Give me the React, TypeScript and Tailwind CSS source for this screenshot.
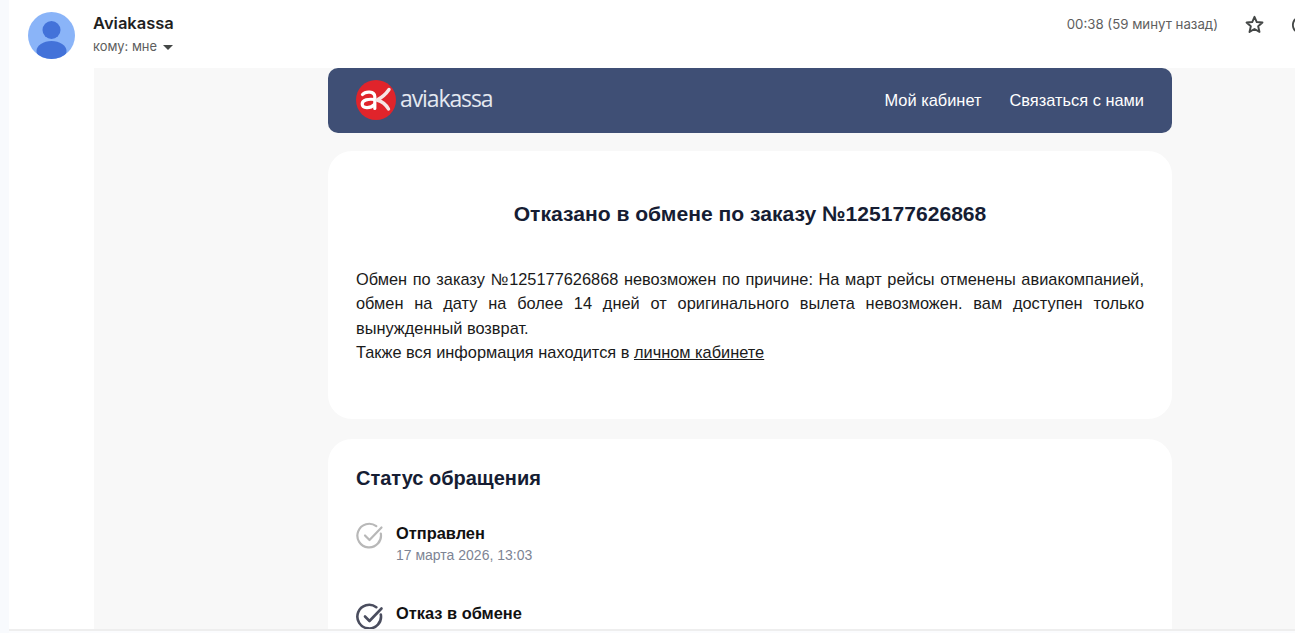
import React from "react";

const sans = "font-['Liberation_Sans',Arial,sans-serif]";

function Check({ color, w }: { color: string; w: number }) {
  return (
    <svg width="28" height="28" viewBox="0 0 28 28" fill="none" stroke={color} strokeWidth={w} strokeLinecap="round" strokeLinejoin="round" className="shrink-0">
      <path d="M24.800 11.500a11.800 11.800 0 1 1-4.500-7.300" />
      <path d="M9 13.500l4.500 4.500L25.500 5.500" />
    </svg>
  );
}

function Avatar() {
  return (
    <svg width="47" height="47" viewBox="0 0 47 47" className="shrink-0">
      <defs>
        <clipPath id="av"><circle cx="23.500" cy="23.500" r="23.500" /></clipPath>
      </defs>
      <circle cx="23.500" cy="23.500" r="23.500" fill="#8ab4f8" />
      <g clipPath="url(#av)" fill="#4372d9">
        <circle cx="23.500" cy="18" r="9" />
        <ellipse cx="23.500" cy="39" rx="15" ry="10" />
      </g>
    </svg>
  );
}

function Logo() {
  return (
    <div className="flex items-center gap-[4px]">
      <svg width="40" height="40" viewBox="0 0 40 40" className="shrink-0">
        <circle cx="20" cy="20" r="20" fill="#e0242b" />
        <path d="M6.500 14.500c3-3.500 12-3.500 12.300 2v12" fill="none" stroke="#fff" strokeWidth="3.200" strokeLinecap="round" />
        <path d="M18.500 19.500c-6-.8-12.300.3-12.300 4.500 0 4.500 8 4.800 12.300.5" fill="none" stroke="#fff" strokeWidth="3.200" strokeLinecap="round" />
        <path d="M33 9.500c-3 4.500-7 8-12 10.500 5 1.500 9 4.500 11.500 9" fill="none" stroke="#f6e6e6" strokeWidth="3.400" strokeLinecap="round" strokeLinejoin="round" />
      </svg>
      <span className="pb-[2px] font-['Open_Sans',sans-serif] text-[23px] font-medium leading-none tracking-[-1.100px] text-[#e4e8f0]">aviakassa</span>
    </div>
  );
}

export default function App() {
  return (
    <div className={`flex h-[633px] w-[1295px] overflow-hidden bg-[#f8fafd] ${sans}`}>
      <div className="w-[9px] shrink-0" />
      <div className="flex min-w-0 flex-1 flex-col bg-white">
        <header className="flex h-[68px] shrink-0 items-start">
          <div className="ml-[19px] mt-[12px]"><Avatar /></div>
          <div className="ml-[18px] mt-[13px] font-['Inter',sans-serif]">
            <div className="text-[16.500px] font-semibold leading-[20px] text-[#1f1f1f]">Aviakassa</div>
            <div className="mt-[6px] flex items-center gap-[6px] text-[12.900px] leading-[16px] text-[#5e5e5e]">
              кому: мне
              <svg width="10" height="5" viewBox="0 0 10 5"><path d="M0 0h10L5 5z" fill="#444746" /></svg>
            </div>
          </div>
          <div className="ml-auto mt-[14px] flex items-center font-['Inter',sans-serif] text-[13.250px] leading-[18px] text-[#5e5e5e]">
            <span className="mb-[2px] mr-[26px]">00:38 (59 минут назад)</span>
            <svg width="21" height="21" viewBox="0 0 24 24" fill="none" stroke="#444746" strokeWidth="2.200" strokeLinejoin="round" className="mr-[25px]">
              <path d="M12 3.200l2.600 6 6.500.6-4.900 4.300 1.500 6.400L12 17.100l-5.700 3.400 1.500-6.400-4.900-4.300 6.500-.6z" />
            </svg>
            <svg width="8" height="20" viewBox="0 0 8 20" fill="none" stroke="#444746" strokeWidth="1.800" className="-mr-[3px]">
              <path d="M7 3a8 8 0 0 0 0 14" />
            </svg>
          </div>
        </header>
        <div className="ml-[85px] min-h-0 flex-1 overflow-hidden bg-[#f8f8f8] pl-[234px]">
          <div className="w-[844px]">
            <div className="flex h-[65px] items-center justify-between rounded-[10px] bg-[#3f4f75] px-[28px] pb-[2px]">
              <Logo />
              <nav className="flex gap-[28px] text-[16.400px] leading-[20px] text-white">
                <span>Мой кабинет</span>
                <span>Связаться с нами</span>
              </nav>
            </div>
            <section className="mt-[18px] h-[268px] rounded-[24px] bg-white px-[28px] pt-[50px]">
              <h1 className="text-center text-[21.100px] font-bold leading-[26px] text-[#161d33]">Отказано в обмене по заказу №125177626868</h1>
              <p className="mt-[40px] text-justify text-[16.380px] leading-[24.400px] text-[#1a1a1a]">
                Обмен по заказу №125177626868 невозможен по причине: На март рейсы отменены авиакомпанией, обмен на дату на более 14 дней от оригинального вылета невозможен. вам доступен только вынужденный возврат.
                <br />
                Также вся информация находится в <span className="underline">личном кабинете</span>
              </p>
            </section>
            <section className="mt-[20px] h-[300px] rounded-[24px] bg-white px-[28px] pt-[27px]">
              <h2 className="text-[20px] font-bold leading-[24px] text-[#161d33]">Статус обращения</h2>
              <div className="mt-[33px] flex h-[80px] items-start gap-[12px]">
                <div className="-mt-[1px]"><Check color="#b8b8b8" w={2.200} /></div>
                <div>
                  <div className="text-[16.400px] font-bold leading-[20px] text-[#111]">Отправлен</div>
                  <div className="mt-[2px] text-[14px] leading-[20px] text-[#7d8494]">17 марта 2026, 13:03</div>
                </div>
              </div>
              <div className="flex items-start gap-[12px]">
                <Check color="#4a4d5e" w={2.600} />
                <div className="text-[16.400px] font-bold leading-[20px] text-[#111]">Отказ в обмене</div>
              </div>
            </section>
          </div>
        </div>
        <div className="h-[4px] shrink-0 border-t-2 border-[#eeeeee] bg-[#fbfcfe]" />
      </div>
    </div>
  );
}
